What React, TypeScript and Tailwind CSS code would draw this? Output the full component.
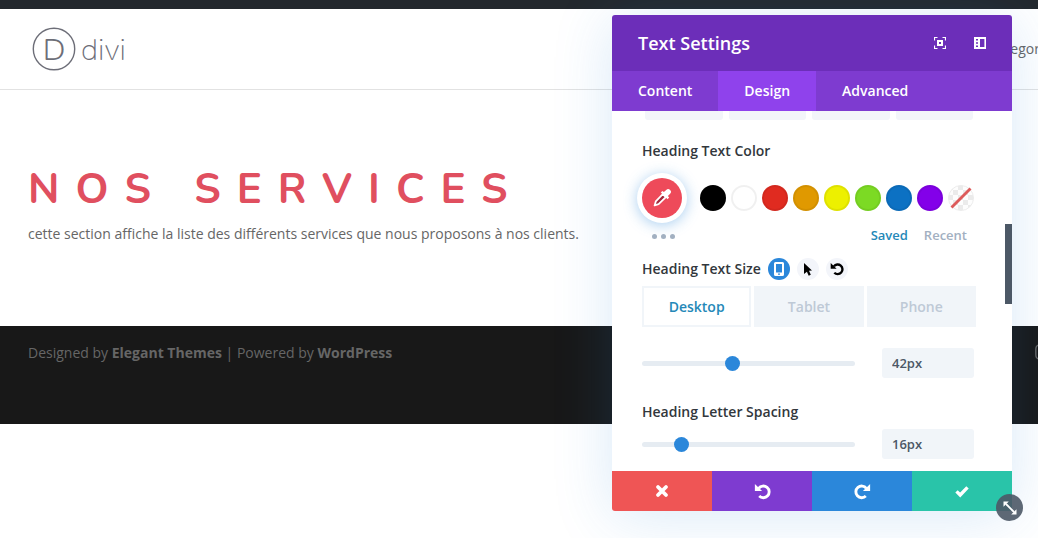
import React, { useState } from 'react';
import { FaInstagram, FaTwitter } from 'react-icons/fa';

interface SliderFieldProps {
  id: string;
  label: string;
  value: number;
  onChange: (value: number) => void;
}

const SWATCHES = [
  { name: 'Black', className: 'bg-[#000000]' },
  { name: 'White', className: 'bg-white' },
  { name: 'Red', className: 'bg-[#e02b20]' },
  { name: 'Orange', className: 'bg-[#e09900]' },
  { name: 'Yellow', className: 'bg-[#edf000]' },
  { name: 'Green', className: 'bg-[#7cda24]' },
  { name: 'Blue', className: 'bg-[#0c71c3]' },
  { name: 'Purple', className: 'bg-[#8300e9]' },
];

const MODAL_TABS = ['Content', 'Design', 'Advanced'];
const DEVICES = ['Desktop', 'Tablet', 'Phone'];

const UndoIcon: React.FC<{ size: number; flip?: boolean }> = ({ size, flip }) => (
  <svg
    width={size}
    height={size}
    viewBox="0 0 16 16"
    fill="none"
    stroke="currentColor"
    strokeWidth="2.7"
    className={flip ? '-scale-x-100' : ''}
  >
    <path d="M4.4 5A5.5 5.5 0 1 1 4.9 12.3" />
    <path d="M0.8 1V7.6H7.6Z" fill="currentColor" stroke="none" />
  </svg>
);

const EyedropperIcon = () => (
  <svg width="20" height="20" viewBox="0 0 20 20">
    <path
      d="M10.8 6.2L13.8 9.2L6.6 16.2L2.6 17.4L3.8 13.4Z"
      fill="#a3283c"
      stroke="white"
      strokeWidth="1.8"
      strokeLinejoin="round"
    />
    <path
      d="M8.8 4.4L10.4 2.9L11.9 4.1L14.2 1.9A2.6 2.6 0 0 1 18.1 5.8L15.9 8.1L17.1 9.6L15.6 11.2Z"
      fill="white"
    />
  </svg>
);

const NoColorIcon = () => (
  <svg width="26" height="26" viewBox="0 0 26 26">
    <defs>
      <pattern id="checker" width="10" height="10" patternUnits="userSpaceOnUse">
        <rect width="10" height="10" fill="#fdfdfd" />
        <rect width="5" height="5" fill="#ebebeb" />
        <rect x="5" y="5" width="5" height="5" fill="#ebebeb" />
      </pattern>
    </defs>
    <circle cx="13" cy="13" r="12.5" fill="url(#checker)" stroke="#ececec" />
    <path d="M3.5 22.5L22.5 3.5" stroke="#dd5b5b" strokeWidth="2.8" />
  </svg>
);

const SliderField: React.FC<SliderFieldProps> = ({ id, label, value, onChange }) => (
  <div className="flex items-center gap-[27px]">
    <input
      id={id}
      type="range"
      min={0}
      max={100}
      value={value}
      aria-label={label}
      onChange={(e) => onChange(Number(e.target.value))}
      className="h-[5px] min-w-0 flex-1 appearance-none rounded-full bg-[#e6ecf2] [&::-webkit-slider-thumb]:size-[15px] [&::-webkit-slider-thumb]:appearance-none [&::-webkit-slider-thumb]:rounded-full [&::-webkit-slider-thumb]:bg-[#2b87da]"
    />
    <input
      type="text"
      value={`${value}px`}
      aria-label={`${label} value`}
      onChange={(e) => onChange(parseInt(e.target.value, 10) || 0)}
      className="mr-0.5 h-[30px] w-[92px] rounded-[3px] bg-[#f1f5f9] px-2.5 text-[13px] font-semibold text-[#4c5866]"
    />
  </div>
);

const SettingsModal = () => {
  const [tab, setTab] = useState('Design');
  const [device, setDevice] = useState('Desktop');
  const [size, setSize] = useState(42);
  const [spacing, setSpacing] = useState(16);

  return (
    <section
      aria-label="Text Settings"
      className="absolute top-[15px] right-[26px] w-[400px] rounded-[3px] bg-white shadow-[0_5px_60px_rgba(43,135,218,0.18)]"
    >
      <header className="flex h-14 items-center justify-between rounded-t-[3px] bg-[#6c2eb9] px-[26px] text-white">
        <h2 className="text-lg font-semibold">Text Settings</h2>
        <div className="flex gap-[28px]">
          <button aria-label="Expand modal">
            <svg width="12" height="12" viewBox="0 0 12 12" fill="none" stroke="white">
              <path d="M0.5 3.5V0.5H3.5M8.5 0.5H11.5V3.5M11.5 8.5V11.5H8.5M3.5 11.5H0.5V8.5" strokeWidth="1.2" />
              <rect x="4" y="4" width="4" height="4" strokeWidth="2" />
            </svg>
          </button>
          <button aria-label="Snap to side">
            <svg width="12" height="12" viewBox="0 0 12 12">
              <path
                d="M0 0H12V12H0ZM6 2V10H10.4V2ZM2 2V3.6H4V2ZM2 5.2V6.8H4V5.2ZM2 8.4V10H4V8.4Z"
                fill="white"
                fillRule="evenodd"
              />
            </svg>
          </button>
        </div>
      </header>

      <nav className="flex h-10 bg-[#7e3bd0]">
        {MODAL_TABS.map((t) => (
          <button
            key={t}
            onClick={() => setTab(t)}
            className={`px-[26px] text-sm font-semibold text-white ${t === tab ? 'bg-[#8f42ec]' : ''}`}
          >
            {t}
          </button>
        ))}
      </nav>

      <div className="relative pr-9 pb-3 pl-[30px]">
        <div className="flex gap-1.5 px-[3px]">
          {[0, 1, 2, 3].map((i) => (
            <div key={i} className="h-[9px] flex-1 rounded-b-[3px] bg-[#f3f5fa]" />
          ))}
        </div>

        <h3 className="mt-[21px] text-sm font-semibold text-[#32373c]">Heading Text Color</h3>

        <div className="mt-[17px] flex items-center justify-between pr-0.5">
          <button
            aria-label="Pick a color"
            className="flex size-10 items-center justify-center rounded-full bg-[#ee4a5a] shadow-[0_0_0_5px_white,0_2px_14px_5px_rgba(43,135,218,0.4)]"
          >
            <EyedropperIcon />
          </button>
          <div className="flex gap-[5px]">
            {SWATCHES.map((s) => (
              <button
                key={s.name}
                aria-label={s.name}
                className={`size-[26px] rounded-full shadow-[inset_0_0_0_2px_rgba(0,0,0,0.06)] ${s.className}`}
              />
            ))}
            <button aria-label="No color">
              <NoColorIcon />
            </button>
          </div>
        </div>

        <div className="mt-[7px] flex items-center justify-between pr-[9px] pl-2.5 text-[13px] leading-5 font-semibold">
          <button aria-label="More colors" className="flex gap-1 pt-[3px]">
            <span className="size-[5px] rounded-full bg-[#a2b0c1]" />
            <span className="size-[5px] rounded-full bg-[#a2b0c1]" />
            <span className="size-[5px] rounded-full bg-[#a2b0c1]" />
          </button>
          <div className="flex gap-4">
            <button className="text-[#2588b8]">Saved</button>
            <button className="text-[#a2b0c1]">Recent</button>
          </div>
        </div>

        <div className="mt-[13px] flex items-center gap-[7px]">
          <h3 className="text-sm font-semibold text-[#32373c]">Heading Text Size</h3>
          <button
            aria-label="Responsive"
            className="flex size-[22px] items-center justify-center rounded-full bg-[#2b87da]"
          >
            <svg width="10" height="14" viewBox="0 0 10 14">
              <path
                d="M1.5 0H8.5A1.5 1.5 0 0 1 10 1.5V12.5A1.5 1.5 0 0 1 8.5 14H1.5A1.5 1.5 0 0 1 0 12.5V1.5A1.5 1.5 0 0 1 1.5 0ZM2 2V10.6H8V2ZM4 11.5V12.7H6V11.5Z"
                fill="white"
                fillRule="evenodd"
              />
            </svg>
          </button>
          <button
            aria-label="Hover"
            className="flex size-[22px] items-center justify-center rounded-full bg-[#f3f5fa] text-black"
          >
            <svg width="8" height="13" viewBox="0 0 8 13">
              <path d="M0 0L8 7.6L5 7.8L6.8 11.8L4.7 12.8L2.9 8.8L0 11Z" fill="currentColor" />
            </svg>
          </button>
          <button
            aria-label="Reset"
            className="flex size-[22px] items-center justify-center rounded-full bg-[#f3f5fa] text-black"
          >
            <UndoIcon size={14} />
          </button>
        </div>

        <div className="mt-1.5 flex h-[41px] gap-[3px]">
          {DEVICES.map((d) => (
            <button
              key={d}
              onClick={() => setDevice(d)}
              className={`flex-1 border-2 border-[#f1f5f9] text-sm font-semibold ${
                d === device ? 'bg-white text-[#2588b8]' : 'bg-[#f1f5f9] text-[#bec9d6]'
              }`}
            >
              {d}
            </button>
          ))}
        </div>

        <div className="mt-[21px]">
          <SliderField id="text-size" label="Heading Text Size" value={size} onChange={setSize} />
        </div>

        <label htmlFor="letter-spacing" className="mt-6 mb-[7px] block text-sm font-semibold text-[#32373c]">
          Heading Letter Spacing
        </label>
        <SliderField
          id="letter-spacing"
          label="Heading Letter Spacing"
          value={spacing}
          onChange={setSpacing}
        />

        <div className="absolute top-[113px] right-0 h-20 w-[7px] bg-[#4c5866]" />
      </div>

      <footer className="grid h-10 grid-cols-4 text-white [&>button]:flex [&>button]:items-center [&>button]:justify-center">
        <button aria-label="Discard" className="rounded-bl-[3px] bg-[#ef5555]">
          <svg width="14" height="14" viewBox="0 0 14 14">
            <path d="M3 3L11 11M11 3L3 11" stroke="white" strokeWidth="3.8" strokeLinecap="round" />
          </svg>
        </button>
        <button aria-label="Undo" className="bg-[#7e3bd0]">
          <UndoIcon size={17} />
        </button>
        <button aria-label="Redo" className="bg-[#2b87da]">
          <UndoIcon size={17} flip />
        </button>
        <button aria-label="Save" className="bg-[#29c4a9]">
          <svg width="16" height="14" viewBox="0 0 16 14">
            <path d="M2.5 7.4L6.2 11L13.5 3.4" fill="none" stroke="white" strokeWidth="3.4" />
          </svg>
        </button>
      </footer>

      <button
        aria-label="Resize"
        className="absolute -right-[11px] -bottom-[10px] flex size-[27px] items-center justify-center rounded-full bg-[#4c5866]/90"
      >
        <svg width="14" height="14" viewBox="0 0 14 14" fill="white">
          <path d="M3 3L11 11" stroke="white" strokeWidth="1.8" />
          <path d="M0.5 0.5H5.8L0.5 5.8ZM13.5 13.5H8.2L13.5 8.2Z" />
        </svg>
      </button>
    </section>
  );
};

const Logo = () => (
  <svg width="96" height="44" viewBox="0 0 96 44" fill="#6d6e78" className="font-['Nunito','Lato',sans-serif]">
    <circle cx="22" cy="22" r="20.7" fill="none" stroke="#6d6e78" strokeWidth="1.4" />
    <text x="22" y="33" fontSize="31" fontWeight="300" textAnchor="middle">
      D
    </text>
    <text x="49" y="33" fontSize="30" fontWeight="200">
      divi
    </text>
  </svg>
);

export default function App() {
  return (
    <div className="relative min-h-screen overflow-hidden bg-white font-['Open_Sans',sans-serif] text-sm text-[#666666]">
      <div className="h-[9px] bg-[#23282d]" />

      <header className="flex h-[81px] items-center justify-between border-b border-[#e2e2e2] pl-8">
        <a href="#home" aria-label="divi">
          <Logo />
        </a>
        <nav className="-mr-5">
          <a href="#categories">Categories</a>
        </nav>
      </header>

      <main className="px-7 pt-[75px] pb-20">
        <h1 className="font-['Nunito','Lato',sans-serif] text-[42px] leading-[50px] font-bold tracking-[16px] text-[#e04f5f]">
          NOS SERVICES
        </h1>
        <p className="mt-[7px] leading-6">
          cette section affiche la liste des différents services que nous proposons à nos clients.
        </p>
      </main>

      <footer className="flex h-[98px] items-start justify-between bg-[#181818] pt-[15px] pl-7">
        <p className="leading-6">
          Designed by{' '}
          <a href="#themes" className="font-bold">
            Elegant Themes
          </a>{' '}
          | Powered by{' '}
          <a href="#wordpress" className="font-bold">
            WordPress
          </a>
        </p>
        <div className="-mr-3.5 flex gap-[22px] pt-0.5 text-lg">
          <a href="#twitter" aria-label="Twitter">
            <FaTwitter />
          </a>
          <a href="#instagram" aria-label="Instagram">
            <FaInstagram />
          </a>
        </div>
      </footer>

      <SettingsModal />
    </div>
  );
}
